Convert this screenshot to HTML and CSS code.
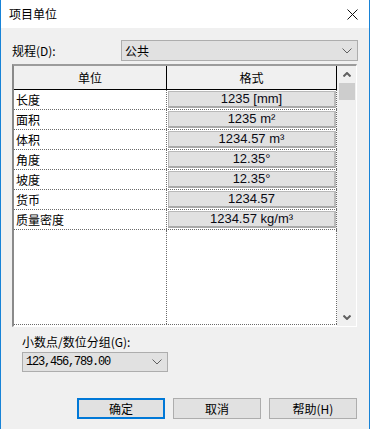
FILE: index.html
```html
<!DOCTYPE html>
<html lang="zh-CN">
<head>
	<meta charset="UTF-8">
	<title>项目单位</title>
	<link rel="stylesheet" href="styles.css">
</head>
<body>
	<div class="window">
		<div class="titlebar">
			<span class="title">项目单位</span>
			<svg class="close" width="11" height="11" viewBox="0 0 11 11">
				<path d="M0.5 0.5 L10.5 10.5 M10.5 0.5 L0.5 10.5" stroke="#111" stroke-width="1" fill="none"/>
			</svg>
		</div>

		<div class="content">
			<div class="field-row">
				<span class="label">规程(D):</span>
				<div class="combo combo-wide">
					<span class="combo-text">公共</span>
					<svg class="chev" width="10" height="6" viewBox="0 0 10 6"><path d="M0.5 0.5 L5 5 L9.5 0.5" stroke="#5f5f5f" fill="none"/></svg>
				</div>
			</div>

			<div class="grid">
				<div class="sheet">
					<div class="row head">
						<div class="cell c1">单位</div>
						<div class="cell c2">格式</div>
					</div>
					<div class="row">
						<div class="cell c1">长度</div>
						<div class="cell c2"><div class="val">1235 [mm]</div></div>
					</div>
					<div class="row">
						<div class="cell c1">面积</div>
						<div class="cell c2"><div class="val">1235 m²</div></div>
					</div>
					<div class="row">
						<div class="cell c1">体积</div>
						<div class="cell c2"><div class="val">1234.57 m³</div></div>
					</div>
					<div class="row">
						<div class="cell c1">角度</div>
						<div class="cell c2"><div class="val">12.35°</div></div>
					</div>
					<div class="row">
						<div class="cell c1">坡度</div>
						<div class="cell c2"><div class="val">12.35°</div></div>
					</div>
					<div class="row">
						<div class="cell c1">货币</div>
						<div class="cell c2"><div class="val">1234.57</div></div>
					</div>
					<div class="row">
						<div class="cell c1">质量密度</div>
						<div class="cell c2"><div class="val">1234.57 kg/m³</div></div>
					</div>
					<div class="row filler">
						<div class="cell c1"></div>
						<div class="cell c2"></div>
					</div>
				</div>
				<div class="vscroll">
					<div class="arrow">
						<svg width="8" height="5" viewBox="0 0 8 5"><path d="M0.5 4.5 L4 1 L7.5 4.5" stroke="#606060" stroke-width="2" fill="none"/></svg>
					</div>
					<div class="track"><div class="thumb"></div></div>
					<div class="arrow">
						<svg width="8" height="5" viewBox="0 0 8 5"><path d="M0.5 0.5 L4 4 L7.5 0.5" stroke="#606060" stroke-width="2" fill="none"/></svg>
					</div>
				</div>
			</div>

			<div class="label sub">小数点/数位分组(G):</div>
			<div class="combo combo-small">
				<span class="combo-text mono">123,456,789.00</span>
				<svg class="chev" width="10" height="6" viewBox="0 0 10 6"><path d="M0.5 0.5 L5 5 L9.5 0.5" stroke="#5f5f5f" fill="none"/></svg>
			</div>

			<div class="buttons">
				<button class="btn default">确定</button>
				<button class="btn">取消</button>
				<button class="btn">帮助(H)</button>
			</div>
		</div>
	</div>
</body>
</html>
```

FILE: styles.css
```css
* {
	box-sizing: border-box;
}

body {
	margin: 0;
	background-color: #fff;
	font-family: "Noto Sans CJK SC", "Liberation Sans", sans-serif;
	font-size: 12px;
	color: #000;
}

.window {
	width: 370px;
	height: 429px;
	border-left: 1px solid #1883d7;
	border-right: 1px solid #1883d7;
	display: flex;
	flex-direction: column;
	overflow: hidden;
}

.titlebar {
	height: 28px;
	flex: none;
	display: flex;
	align-items: center;
	padding-left: 8px;
	background-color: #fff;
}

.title {
	font-size: 12px;
	line-height: 16px;
}

.close {
	margin-left: auto;
	margin-right: 11px;
}

.content {
	flex: 1;
	background-color: #f0f0f0;
	padding: 12px 11px 0 11px;
}

.field-row {
	display: flex;
	align-items: center;
	height: 21px;
}

.label {
	line-height: 14px;
}

.combo {
	display: flex;
	align-items: center;
	background-color: #e1e1e1;
	border: 1px solid #adadad;
	padding-left: 3px;
	padding-right: 5px;
}

.combo-wide {
	margin-left: auto;
	width: 237px;
	height: 21px;
}

.combo-small {
	margin-top: 3px;
	margin-left: 10px;
	width: 146px;
	height: 20px;
}

.combo-text {
	line-height: 16px;
}

.mono {
	font-family: "Liberation Mono", monospace;
	font-size: 12px;
	letter-spacing: -1.2px;
}

.chev {
	margin-left: auto;
}

.grid {
	margin-top: 3px;
	width: 345px;
	height: 263px;
	display: flex;
	border-top: 2px solid #9c9c9c;
	border-left: 2px solid #8a8a8a;
	border-right: 1px solid #fff;
	border-bottom: 1px solid #fff;
}

.sheet {
	width: 324px;
	display: flex;
	flex-direction: column;
	background-color: #fff;
	padding-bottom: 1px;
}

.row {
	display: grid;
	grid-template-columns: 153px 170px;
	height: 20px;
	border-bottom: 1px dotted #6a6a6a;
}

.cell {
	border-right: 1px dotted #6a6a6a;
}

.row .c1 {
	padding-left: 2px;
	line-height: 19px;
}

.row .c2 {
	padding: 1px 0 0 1px;
}

.head {
	height: 24px;
	border-bottom: 1px solid #000;
	background-color: #f0f0f0;
}

.head .cell {
	border-right: 1px solid #000;
	text-align: center;
	line-height: 23px;
	padding: 0;
}

.val {
	width: 168px;
	height: 17px;
	background-color: #e1e1e1;
	border: 1px solid #b9b9b9;
	border-right-width: 2px;
	border-bottom: 2px solid #a9a9a9;
	font-family: "Liberation Sans", sans-serif;
	font-size: 13px;
	line-height: 14px;
	text-align: center;
	color: #0a0a14;
}

.filler {
	flex: 1;
	height: auto;
}

.vscroll {
	width: 18px;
	margin-left: 1px;
	display: flex;
	flex-direction: column;
	background-color: #f0f0f0;
}

.arrow {
	height: 17px;
	display: flex;
	align-items: center;
	justify-content: center;
}

.track {
	flex: 1;
}

.thumb {
	height: 17px;
	margin: 0 1px;
	background-color: #cdcdcd;
}

.sub {
	margin-top: 8px;
	padding-left: 10px;
}

.buttons {
	margin-top: 26px;
	display: flex;
	justify-content: flex-end;
	gap: 8px;
	padding-right: 1px;
}

.btn {
	width: 88px;
	height: 21px;
	padding: 0;
	background-color: #e1e1e1;
	border: 1px solid #adadad;
	font-family: "Noto Sans CJK SC", "Liberation Sans", sans-serif;
	font-size: 12px;
	line-height: 16px;
	color: #000;
}

.btn.default {
	border: 2px solid #0078d7;
}
```
